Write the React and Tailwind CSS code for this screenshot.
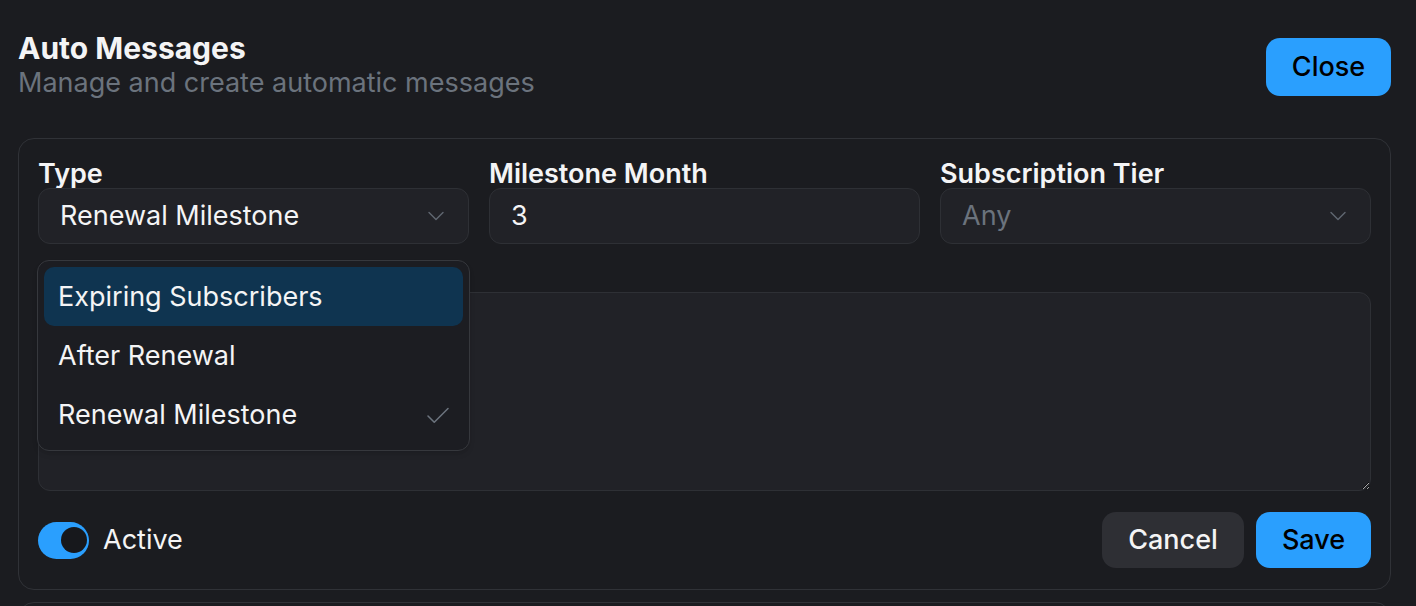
import { Check, ChevronDown } from "lucide-react";

const TYPES = ["Expiring Subscribers", "After Renewal", "Renewal Milestone"];

function Field({ label, children }) {
  return (
    <div className="flex min-w-0 flex-col">
      <span className="h-[29px] text-[27px] font-semibold leading-[30px] text-[#f4f4f5]">{label}</span>
      {children}
    </div>
  );
}

function SelectBox({ value, placeholder }) {
  return (
    <div className="flex h-[56px] items-center justify-between rounded-[12px] border border-[#2e3035] bg-[#212227] pl-[21px] pr-[18px]">
      <span className={value ? "text-[27px] text-[#f4f4f5]" : "text-[27px] text-[#6b737d]"}>
        {value || placeholder}
      </span>
      <ChevronDown className="h-[28px] w-[28px] text-[#5f666f]" strokeWidth={1.25} aria-hidden />
    </div>
  );
}

function TypeMenu({ selected, active }) {
  return (
    <div className="absolute left-[-1px] top-[101px] z-10 w-[433px] rounded-[12px] border border-[#36383d] bg-[#1c1d22] p-[6px] shadow-md">
      {TYPES.map((t) => (
        <div
          key={t}
          className={[
            "flex h-[59px] items-center justify-between rounded-[10px] pl-[14px] pr-[10px] pt-[2px] text-[27px] text-[#f4f4f5]",
            t === active ? "bg-[#0f3450]" : "",
          ].join(" ")}
        >
          <span>{t}</span>
          {t === selected ? (
            <Check className="h-[30px] w-[30px] text-[#6b737d]" strokeWidth={1.25} aria-hidden />
          ) : null}
        </div>
      ))}
    </div>
  );
}

export default function App() {
  return (
    <div
      className="h-[606px] overflow-hidden bg-[#1b1c20] pl-[18px] pr-[25px] pt-[30px]"
      style={{ fontFamily: "Inter, 'Noto Sans', sans-serif" }}
    >
      <div className="flex items-center justify-between">
        <div>
          <h1 className="text-[30px] font-bold leading-[36px] text-[#f4f4f5]">Auto Messages</h1>
          <p className="text-[27px] leading-[34px] text-[#6b737d]">Manage and create automatic messages</p>
        </div>
        <button
          type="button"
          className="mt-[4px] h-[58px] w-[125px] rounded-[14px] bg-[#2a9ffe] text-[27px] font-medium text-black"
        >
          Close
        </button>
      </div>

      <div className="mt-[38px] rounded-[16px] border border-[#303237] px-[19px] pb-[21px] pt-[20px]">
        <div className="relative">
          <div className="grid grid-cols-3 gap-[20px]">
            <Field label="Type">
              <SelectBox value="Renewal Milestone" />
            </Field>
            <Field label="Milestone Month">
              <div className="flex h-[56px] items-center rounded-[12px] border border-[#2e3035] bg-[#212227] pl-[21px] text-[27px] text-[#f4f4f5]">
                3
              </div>
            </Field>
            <Field label="Subscription Tier">
              <SelectBox placeholder="Any" />
            </Field>
          </div>
          <TypeMenu selected="Renewal Milestone" active="Expiring Subscribers" />
        </div>

        {/* message label sits under the open menu */}
        <div className="mt-[48px]">
          <textarea
            aria-label="Message"
            className="block h-[199px] w-full resize-y rounded-[12px] border border-[#2e3035] bg-[#212227] px-[21px] py-[14px] text-[27px] text-[#f4f4f5] outline-none"
            style={{ colorScheme: "dark" }}
            defaultValue=""
          />
        </div>

        <div className="mt-[21px] flex items-center justify-between">
          <div className="flex items-center gap-[14px]">
            <div className="flex h-[37px] w-[51px] items-center justify-end rounded-full bg-[#2a9ffe] pr-[2px]">
              <div className="h-[26px] w-[26px] rounded-full bg-[#17181c]" />
            </div>
            <span className="text-[27px] text-[#f4f4f5]">Active</span>
          </div>
          <div className="flex items-center gap-[12px]">
            <button
              type="button"
              className="h-[56px] w-[142px] rounded-[14px] bg-[#2e2f34] text-[27px] font-medium text-[#f4f4f5]"
            >
              Cancel
            </button>
            <button
              type="button"
              className="h-[56px] w-[115px] rounded-[14px] bg-[#2a9ffe] text-[27px] font-medium text-black"
            >
              Save
            </button>
          </div>
        </div>
      </div>

      <div className="mt-[12px] h-[120px] rounded-[16px] border border-[#303237]" />
    </div>
  );
}
